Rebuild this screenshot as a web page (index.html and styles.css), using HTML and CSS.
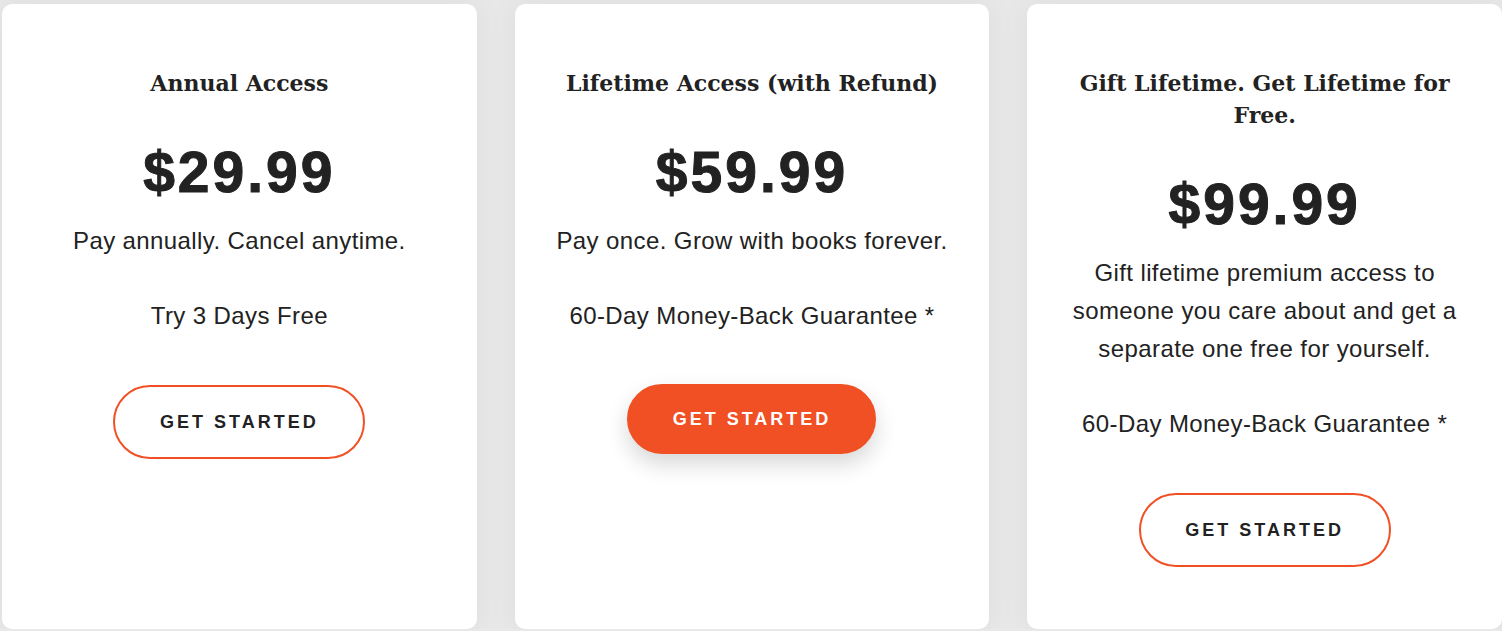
FILE: index.html
```html
<!DOCTYPE html>
<html lang="en">
<head>
  <meta charset="UTF-8" />
  <title>Pricing</title>
  <link rel="stylesheet" href="styles.css">
</head>
<body>

<div class="plans">
  <div class="plan">
    <h2 class="plan-title">Annual Access</h2>
    <div class="plan-price">$29.99</div>
    <p class="plan-text">Pay annually. Cancel anytime.</p>
    <p class="plan-text">Try 3 Days Free</p>
    <a href="#" class="btn-start">Get Started</a>
  </div>

  <div class="plan">
    <h2 class="plan-title">Lifetime Access (with Refund)</h2>
    <div class="plan-price">$59.99</div>
    <p class="plan-text">Pay once. Grow with books forever.</p>
    <p class="plan-text">60-Day Money-Back Guarantee *</p>
    <a href="#" class="btn-start filled">Get Started</a>
  </div>

  <div class="plan">
    <h2 class="plan-title">Gift Lifetime. Get Lifetime for Free.</h2>
    <div class="plan-price">$99.99</div>
    <p class="plan-text">Gift lifetime premium access to someone you care about and get a separate one free for yourself.</p>
    <p class="plan-text">60-Day Money-Back Guarantee *</p>
    <a href="#" class="btn-start">Get Started</a>
  </div>
</div>

</body>
</html>
```

FILE: styles.css
```css
body {
  margin: 0;
  background: #e8e8e8;
  font-family: "Liberation Sans", Arial, sans-serif;
  color: #222;
  overflow: hidden;
}

.plans {
  display: grid;
  grid-template-columns: repeat(3, 1fr);
  gap: 38px;
  padding: 4px 0 0 2px;
}

.plan {
  background: #fff;
  border-radius: 10px;
  height: 625px;
  box-sizing: border-box;
  padding: 63px 36px 0;
  text-align: center;
  box-shadow: 0 0 30px rgba(0, 0, 0, 0.05);
}

.plan-title {
  margin: 0;
  font-family: "DejaVu Serif", Georgia, serif;
  font-size: 22px;
  font-weight: bold;
  line-height: 32px;
  color: #222;
}

.plan-price {
  margin: 41px 0 18px;
  font-size: 57px;
  font-weight: bold;
  letter-spacing: 3px;
  line-height: 64px;
  color: #222;
  -webkit-text-stroke: 1px #222;
}

.plan-text {
  margin: 0 0 37px;
  font-size: 24px;
  letter-spacing: 0.4px;
  line-height: 38px;
}

.btn-start {
  display: inline-block;
  box-sizing: border-box;
  width: 252px;
  height: 74px;
  margin-top: 13px;
  line-height: 70px;
  border: 2px solid #f05023;
  border-radius: 40px;
  font-size: 18px;
  font-weight: bold;
  letter-spacing: 3px;
  text-transform: uppercase;
  text-decoration: none;
  color: #222;
}

.btn-start.filled {
  width: 249px;
  height: 70px;
  line-height: 66px;
  margin-top: 12px;
  background-color: #f05023;
  color: #fff;
  box-shadow: 0 10px 22px rgba(0, 0, 0, 0.16);
}
```
